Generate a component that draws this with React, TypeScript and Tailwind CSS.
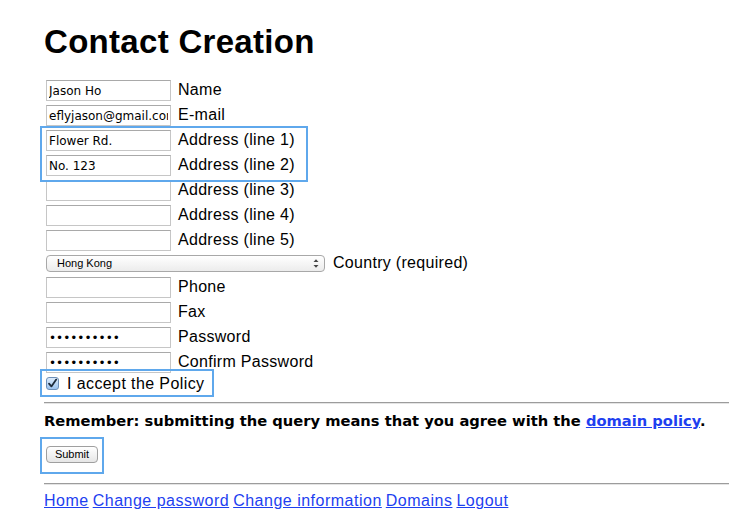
import React from "react";

const inputFont = { fontFamily: '"DejaVu Sans", sans-serif' };

function TextRow({ value, label, type = "text" }: { value: string; label: string; type?: string }) {
  return (
    <div className="flex h-[21px] items-center">
      <input
        readOnly
        type={type}
        value={value}
        style={inputFont}
        className="ml-[2px] box-border h-[21px] w-[125px] border border-[#c6c6c6] border-t-[#a9a9a9] bg-white px-[2px] text-[12px] text-black outline-none"
      />
      <span className="mb-[2px] ml-[7px] text-[16px] leading-[21px] tracking-[0.3px] text-black">{label}</span>
    </div>
  );
}

export default function App() {
  return (
    <div
      className="relative min-h-[531px] w-full overflow-hidden bg-white pl-[44px] pr-[17px] pt-[25px] text-black"
      style={{ fontFamily: '"Liberation Sans", Arial, sans-serif' }}
    >
      <h1 className="text-[33px] font-bold leading-[33px] tracking-[0.3px]">Contact Creation</h1>

      <div className="mt-[22px] flex flex-col gap-[4px]">
        <TextRow value="Jason Ho" label="Name" />
        <TextRow value="eflyjason@gmail.com" label="E-mail" />
        <TextRow value="Flower Rd." label="Address (line 1)" />
        <TextRow value="No. 123" label="Address (line 2)" />
        <TextRow value="" label="Address (line 3)" />
        <TextRow value="" label="Address (line 4)" />
        <TextRow value="" label="Address (line 5)" />
        <div className="flex h-[17px] items-start">
          <div className="relative ml-[2px] box-border flex h-[17px] w-[279px] items-center rounded-[4px] border border-[#a8a8a8] bg-gradient-to-b from-white to-[#ececec] pl-[10px] text-[11px]">
            <span>Hong Kong</span>
            <span className="absolute right-[5px] top-[2px] flex flex-col items-center leading-none">
              <svg width="6" height="11" viewBox="0 0 6 11">
                <path d="M0.5 4 L3 1.2 L5.5 4 Z" fill="#444" />
                <path d="M0.5 7 L3 9.8 L5.5 7 Z" fill="#444" />
              </svg>
            </span>
          </div>
          <span className="-mt-[3px] ml-[8px] text-[16px] leading-[21px] tracking-[0.3px]">Country (required)</span>
        </div>
        <div className="mt-[1px] flex flex-col gap-[4px]">
          <TextRow value="" label="Phone" />
          <TextRow value="" label="Fax" />
          <TextRow value="abcdefghij" type="password" label="Password" />
          <TextRow value="abcdefghij" type="password" label="Confirm Password" />
        </div>
      </div>

      <div className="flex h-[21px] items-center">
        <span className="ml-[2px] flex h-[13px] w-[13px] items-center justify-center rounded-[3px] border border-[#6d8fb8] bg-gradient-to-b from-[#dcebfb] to-[#9cc3ef]">
          <svg width="11" height="11" viewBox="0 0 11 11">
            <path d="M2 5.6 L4.4 8.4 L9.2 1.6" fill="none" stroke="#1d2a3a" strokeWidth="1.8" strokeLinecap="round" strokeLinejoin="round" />
          </svg>
        </span>
        <span className="mb-[1px] ml-[8px] text-[16px] leading-[21px] tracking-[0.4px]">I accept the Policy</span>
      </div>

      <div className="mt-[8px] border-t border-b border-t-[#9c9c9c] border-b-[#e4e4e4]" />

      <p
        className="mt-[8px] text-[14.7px] font-bold leading-[18px]"
        style={{ fontFamily: '"DejaVu Sans", sans-serif' }}
      >
        Remember: submitting the query means that you agree with the{" "}
        <a href="#" className="text-[#1e3ff0] underline">domain policy</a>.
      </p>

      <button
        type="button"
        className="ml-[2px] mt-[16px] box-border flex h-[17px] w-[52px] items-center justify-center rounded-[4px] border border-[#9f9f9f] bg-gradient-to-b from-white to-[#e6e6e6] text-[11px] leading-none text-black"
      >
        Submit
      </button>

      <div className="mt-[20px] border-t border-b border-t-[#9c9c9c] border-b-[#e4e4e4]" />

      <nav className="mt-[6px] flex gap-[4px] text-[16px] leading-[20px] tracking-[0.5px]">
        <a href="#" className="text-[#1e3ff0] underline">Home</a>
        <a href="#" className="text-[#1e3ff0] underline">Change password</a>
        <a href="#" className="text-[#1e3ff0] underline">Change information</a>
        <a href="#" className="text-[#1e3ff0] underline">Domains</a>
        <a href="#" className="text-[#1e3ff0] underline">Logout</a>
      </nav>

      <div className="pointer-events-none absolute left-[40px] top-[126px] h-[56px] w-[268px] border-2 border-[#5fa8ec]" />
      <div className="pointer-events-none absolute left-[40px] top-[369px] h-[28px] w-[174px] border-2 border-[#5fa8ec]" />
      <div className="pointer-events-none absolute left-[40px] top-[437px] h-[37px] w-[64px] border-2 border-[#5fa8ec]" />
    </div>
  );
}
